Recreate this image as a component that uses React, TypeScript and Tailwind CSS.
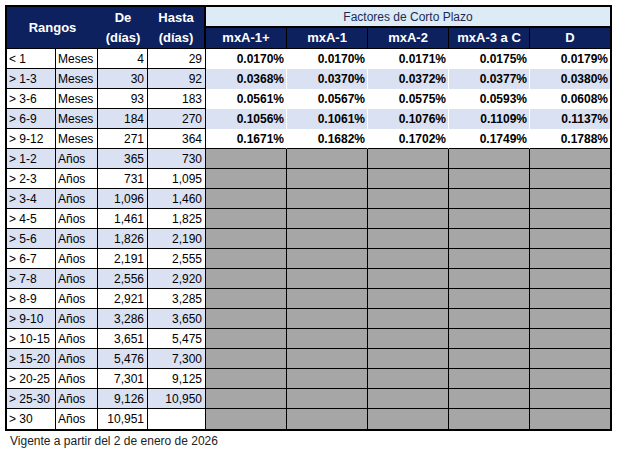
const rows = [
  { r: "< 1", u: "Meses", de: "4", hasta: "29", f: ["0.0170%", "0.0170%", "0.0171%", "0.0175%", "0.0179%"] },
  { r: "> 1-3", u: "Meses", de: "30", hasta: "92", f: ["0.0368%", "0.0370%", "0.0372%", "0.0377%", "0.0380%"] },
  { r: "> 3-6", u: "Meses", de: "93", hasta: "183", f: ["0.0561%", "0.0567%", "0.0575%", "0.0593%", "0.0608%"] },
  { r: "> 6-9", u: "Meses", de: "184", hasta: "270", f: ["0.1056%", "0.1061%", "0.1076%", "0.1109%", "0.1137%"] },
  { r: "> 9-12", u: "Meses", de: "271", hasta: "364", f: ["0.1671%", "0.1682%", "0.1702%", "0.1749%", "0.1788%"] },
  { r: "> 1-2", u: "Años", de: "365", hasta: "730" },
  { r: "> 2-3", u: "Años", de: "731", hasta: "1,095" },
  { r: "> 3-4", u: "Años", de: "1,096", hasta: "1,460" },
  { r: "> 4-5", u: "Años", de: "1,461", hasta: "1,825" },
  { r: "> 5-6", u: "Años", de: "1,826", hasta: "2,190" },
  { r: "> 6-7", u: "Años", de: "2,191", hasta: "2,555" },
  { r: "> 7-8", u: "Años", de: "2,556", hasta: "2,920" },
  { r: "> 8-9", u: "Años", de: "2,921", hasta: "3,285" },
  { r: "> 9-10", u: "Años", de: "3,286", hasta: "3,650" },
  { r: "> 10-15", u: "Años", de: "3,651", hasta: "5,475" },
  { r: "> 15-20", u: "Años", de: "5,476", hasta: "7,300" },
  { r: "> 20-25", u: "Años", de: "7,301", hasta: "9,125" },
  { r: "> 25-30", u: "Años", de: "9,126", hasta: "10,950" },
  { r: "> 30", u: "Años", de: "10,951", hasta: "" },
];

const factores = ["mxA-1+", "mxA-1", "mxA-2", "mxA-3 a C", "D"];

export default function App() {
  return (
    <div className="min-h-[454px] bg-white font-['Liberation_Sans',Arial,sans-serif] text-[12px] text-black">
      <div className="ml-[5px] pt-[5px]">
        <div className="w-[607px] border-2 border-black grid grid-cols-[49px_42px_50px_58px_81px_81px_81px_81px_80px] grid-rows-[21px_21px_repeat(19,20px)]">
          {/* header */}
          <div className="col-span-2 row-span-2 bg-[#0d215f] border-b border-black flex items-center justify-center text-white font-bold text-[13px]">
            Rangos
          </div>
          <div className="row-span-2 bg-[#0d215f] border-b border-black flex flex-col items-center justify-center text-white font-bold text-[13px] leading-[20px]">
            <span>De</span>
            <span>(días)</span>
          </div>
          <div className="row-span-2 bg-[#0d215f] border-b border-r-2 border-black flex flex-col items-center justify-center text-white font-bold text-[13px] leading-[20px]">
            <span>Hasta</span>
            <span>(días)</span>
          </div>
          <div className="col-span-5 bg-[#ddebf7] border-b-2 border-black flex items-center justify-center text-[#1b2a52] text-[12px]">
            Factores de Corto Plazo
          </div>
          {factores.map((f, i) => (
            <div
              key={f}
              className={`bg-[#0d215f] border-b border-black flex items-center justify-center text-white font-bold text-[13px] ${i < 4 ? "border-r" : ""}`}
            >
              {f}
            </div>
          ))}

          {/* body */}
          {rows.map((row, i) => {
            const last = i === rows.length - 1;
            const bg = i % 2 === 1 ? "bg-[#d9e1f2]" : "bg-white";
            const bb = last ? "" : "border-b";
            return (
              <div key={row.r} className="contents">
                <div className={`${bg} ${bb} border-r border-black flex items-center pl-[2px] whitespace-nowrap`}>{row.r}</div>
                <div className={`${bg} ${bb} border-r border-black flex items-center pl-[2px]`}>{row.u}</div>
                <div className={`${bg} ${bb} border-r border-black flex items-center justify-end pr-[3px]`}>{row.de}</div>
                <div className={`${bg} ${bb} border-r border-black flex items-center justify-end pr-[3px]`}>{row.hasta}</div>
                {row.f
                  ? row.f.map((v, j) => (
                      <div
                        key={j}
                        className={`${bg} ${i === 4 ? "border-b border-b-black" : ""} ${j < 4 ? "border-r border-r-white" : ""} flex items-center justify-end pr-[2px] font-bold`}
                      >
                        {v}
                      </div>
                    ))
                  : [0, 1, 2, 3, 4].map((j) => (
                      <div
                        key={j}
                        className={`bg-[#a6a6a6] ${bb} ${j < 4 ? "border-r" : ""} border-black`}
                      />
                    ))}
              </div>
            );
          })}
        </div>
        <div className="mt-[2px] ml-[5px] leading-[16px] text-[12px] text-[#222]">
          Vigente a partir del 2 de enero de 2026
        </div>
      </div>
    </div>
  );
}
